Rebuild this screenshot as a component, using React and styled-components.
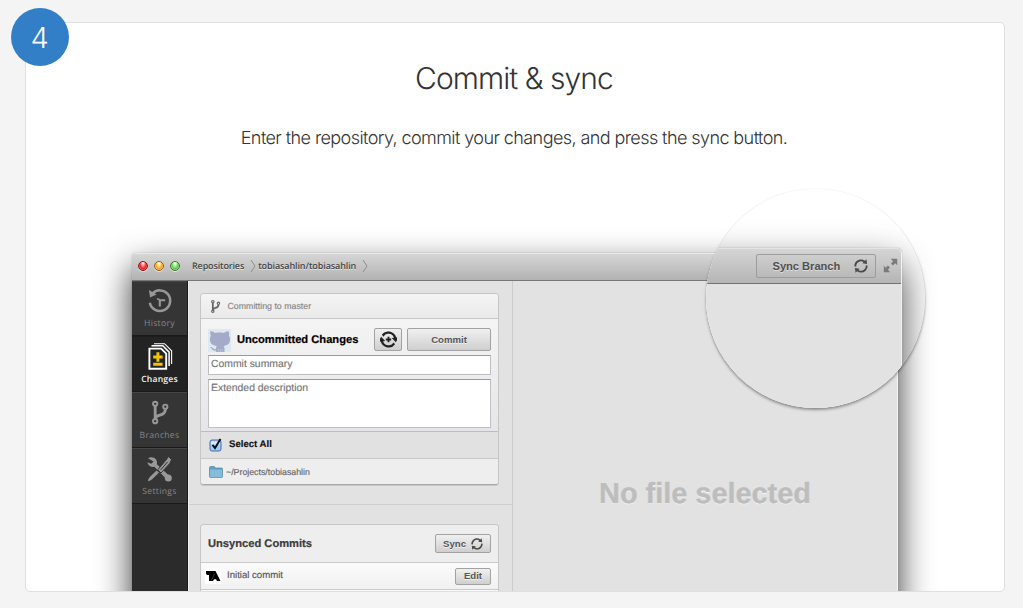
import React from 'react';
import styled, { createGlobalStyle, css } from 'styled-components';

const Global = createGlobalStyle`
  *, *::before, *::after { box-sizing: border-box; }
  body {
    margin: 0;
    background: #f4f4f4;
    font-family: "Liberation Sans", Arial, sans-serif;
    text-rendering: geometricPrecision;
    -webkit-font-smoothing: antialiased;
  }
`;

const Page = styled.main`
  position: relative;
  width: 1023px;
  height: 608px;
  padding: 22px 18px 16px 25px;
  overflow: hidden;
`;

const StepBadge = styled.div`
  position: absolute;
  left: 11px;
  top: 8px;
  z-index: 3;
  display: flex;
  align-items: center;
  justify-content: center;
  width: 58px;
  height: 58px;
  border-radius: 50%;
  background: #327fc7;
  color: #fff;
  font: 300 29px/60px Inter, sans-serif;
  padding: 2px 1px 0 0;
`;

const Card = styled.section`
  position: relative;
  display: flex;
  flex-direction: column;
  align-items: center;
  height: 570px;
  border: 1px solid #dfdfdf;
  border-radius: 5px;
  background: #fff;
  overflow: hidden;
`;

const Title = styled.h2`
  margin: 36px 0 0;
  padding-right: 2px;
  color: #333;
  font: 300 30px/40px Inter, sans-serif;
  letter-spacing: -0.95px;
`;

const Lead = styled.p`
  margin: 26px 0 0;
  padding-right: 2px;
  color: #333;
  font: 300 18px/28px Inter, sans-serif;
  letter-spacing: -0.58px;
  white-space: nowrap;
`;

const Window = styled.div`
  align-self: flex-start;
  flex: none;
  display: flex;
  flex-direction: column;
  width: 766px;
  height: 400px;
  margin: 100px 0 0 106px;
  border-radius: 4px 4px 0 0;
  background: #e2e2e2;
  box-shadow: 0 15px 34px rgba(0, 0, 0, 0.8), 0 0 1px rgba(0, 0, 0, 0.5);
`;

const TitleBar = styled.header`
  display: flex;
  align-items: center;
  height: 28px;
  padding: 0 6px 2px;
  border-top: 1px solid #e9e9e9;
  border-bottom: 1px solid #777;
  border-radius: 4px 4px 0 0;
  background: linear-gradient(#d6d6d6, #b2b2b2);
`;

const lights = {
  red: ['#fbb0ab', '#e8202b', '#8e1a1c'],
  yellow: ['#fff0ae', '#f5a623', '#97601b'],
  green: ['#d6ffc0', '#62c656', '#3c7a35'],
};

const Light = styled.span`
  width: 10px;
  height: 10px;
  margin-right: 6px;
  border: 1px solid ${(p) => lights[p.$tone][2]};
  border-radius: 50%;
  background: radial-gradient(ellipse at 50% 12%, #fff 0, ${(p) => lights[p.$tone][0]} 20%, ${(p) => lights[p.$tone][1]} 58%, ${(p) => lights[p.$tone][0]} 100%);
  box-shadow: 0 1px 0 rgba(255, 255, 255, 0.6);
`;

const Crumb = styled.span`
  margin-left: ${(p) => p.$gap}px;
  color: #444;
  font: 600 9px/14px "Open Sans", "Noto Sans", sans-serif;
  letter-spacing: ${(p) => p.$track}px;
  text-shadow: 0 1px 0 rgba(255, 255, 255, 0.6);
`;

const CrumbArrow = styled.svg`
  width: 6px;
  height: 14px;
  margin-left: 6px;
  fill: none;
  stroke: #909090;
`;

const WindowBody = styled.div`
  flex: 1;
  display: flex;
  min-height: 0;
`;

const Sidebar = styled.nav`
  width: 56px;
  background: #2b2b2b;
  border-right: 1px solid #1b1b1b;
`;

const NavItem = styled.div`
  display: flex;
  flex-direction: column;
  align-items: center;
  height: ${(p) => p.$h || 56}px;
  padding-top: ${(p) => p.$pad || 7}px;
  border-bottom: 1px solid #191919;
  box-shadow: inset 0 1px 0 ${(p) => (p.$active ? '#1d1d1d' : '#454545')};
  background: ${(p) => (p.$active ? '#232323' : '#353535')};
  color: ${(p) => (p.$active ? '#fff' : '#989898')};
  svg { width: 28px; height: 28px; }
`;

const NavLabel = styled.span`
  margin-top: 2px;
  color: ${(p) => (p.$active ? '#f4f4f4' : '#878787')};
  font: ${(p) => (p.$active ? 600 : 400)} 8.6px/12px "Open Sans", "Noto Sans", sans-serif;
  letter-spacing: ${(p) => (p.$active ? 0.2 : 0.3)}px;
`;

const ChangesPane = styled.section`
  display: flex;
  flex-direction: column;
  width: 325px;
  border-left: 1px solid #efefef;
  border-right: 1px solid #cccccc;
`;

const Group = styled.div`
  padding: ${(p) => p.$top || 11}px 13px ${(p) => p.$bottom || 0}px 11px;
  border-bottom: ${(p) => (p.$line ? '1px solid #cfcfcf' : '0')};
`;

const Panel = styled.div`
  margin-top: ${(p) => p.$top || 0}px;
  border: 1px solid #c6c6c6;
  border-bottom-color: #aaa;
  border-radius: 4px;
  background: #eee;
  box-shadow: 0 1px 0 rgba(0, 0, 0, 0.12);
  overflow: hidden;
`;

const rowTones = {
  light: css`background: linear-gradient(#f4f4f4, #eaeaea);`,
  select: css`background: #e1e1e1;`,
  plain: css`background: #eee;`,
  white: css`background: linear-gradient(#fbfbfb, #f1f1f1);`,
};

const Row = styled.div`
  display: flex;
  align-items: center;
  height: ${(p) => p.$h}px;
  padding: 0 7px 0 ${(p) => p.$left || 7}px;
  border-bottom: 1px solid #c9c9c9;
  ${(p) => rowTones[p.$tone]}
  &:last-child { border-bottom: 0; }
`;

const Form = styled.div`
  height: 113px;
  padding: 9px 7px 0;
  border-bottom: 1px solid #bcbcbc;
  background: linear-gradient(#f4f4f4, #e6e6ea);
`;

const FormHead = styled.div`
  display: flex;
  align-items: center;
  height: 24px;
`;

const Heading = styled.strong`
  flex: 1;
  margin-left: ${(p) => p.$gap || 0}px;
  color: ${(p) => p.$color || '#000'};
  font-size: 11.15px;
  line-height: 16px;
  -webkit-text-stroke: 0.2px;
`;

const Label = styled.span`
  margin-left: ${(p) => p.$gap}px;
  flex: ${(p) => (p.$grow ? 1 : 'none')};
  color: ${(p) => p.$color || '#777'};
  font-size: ${(p) => p.$size || 8.8}px;
  font-weight: ${(p) => (p.$bold ? 700 : 400)};
  line-height: 14px;
  -webkit-text-stroke: 0.15px;
`;

const Button = styled.button`
  display: flex;
  align-items: center;
  justify-content: center;
  gap: 5px;
  width: ${(p) => p.$w}px;
  height: ${(p) => p.$h}px;
  margin: 0 0 ${(p) => p.$lift || 0}px ${(p) => p.$gap || 0}px;
  padding: 0;
  border: 1px solid #a2a2a2;
  border-radius: 2px;
  background: linear-gradient(#f0f0f0, #cfcfcf);
  color: #555;
  font: 700 9.6px/12px "Liberation Sans", Arial, sans-serif;
  text-shadow: 0 1px 0 rgba(255, 255, 255, 0.7);
`;

const Field = styled.div`
  height: ${(p) => p.$h}px;
  margin-top: ${(p) => p.$top}px;
  padding: 2px 2px;
  border: 1px solid #c0c0c0;
  border-top-color: #999;
  background: #fff;
  color: #757575;
  font-size: 10.4px;
  line-height: 14px;
  -webkit-text-stroke: 0.15px;
`;

const Avatar = styled.svg`
  width: 23px;
  height: 23px;
  flex: none;
  background: #dfe8f1;
`;

const FilePane = styled.section`
  flex: 1;
  padding-top: 192px;
  border-right: 1px solid #f6f6f6;
  text-align: center;
`;

const Empty = styled.p`
  margin: 0;
  color: #bdbdbd;
  font-size: 28.9px;
  font-weight: 700;
  line-height: 42px;
  text-shadow: 0 1px 0 #f7f7f7;
  -webkit-text-stroke: 0.4px;
`;

const Lens = styled.div`
  position: absolute;
  left: 679.5px;
  top: 166px;
  width: 219px;
  height: 219px;
  padding-top: 59px;
  border-radius: 50%;
  background: #fff;
  overflow: hidden;
`;

const LensShade = styled.div`
  position: absolute;
  left: 679.5px;
  top: 166px;
  width: 219px;
  height: 219px;
  border-radius: 50%;
  box-shadow: 0 2px 3px rgba(0, 0, 0, 0.38), 0 0 1px rgba(0, 0, 0, 0.12);
`;

const LensWindow = styled.div`
  width: 224.5px;
  height: 300px;
  margin-left: -28.5px;
  border-right: 1px solid #f4f4f4;
  border-radius: 0 5px 0 0;
  background: #e2e2e2;
  box-shadow: 0 17px 38px rgba(0, 0, 0, 0.72), 0 0 1px rgba(0, 0, 0, 0.5);
`;

const LensBar = styled.div`
  display: flex;
  align-items: center;
  justify-content: flex-end;
  gap: 7px;
  height: 36px;
  padding: 0 3px 1px 0;
  border-top: 1px solid #e4e4e4;
  border-bottom: 1px solid #757575;
  border-radius: 0 5px 0 0;
  background: linear-gradient(#d5d5d5, #b5b5b5);
`;

const SyncBranch = styled.button`
  display: flex;
  align-items: center;
  justify-content: space-between;
  width: 120px;
  height: 24px;
  padding: 0 7px 0 16px;
  border: 1px solid #9c9c9c;
  border-radius: 2px;
  background: linear-gradient(#cecece, #b9b9b9);
  color: #505050;
  font: 700 11.1px/14px "Liberation Sans", Arial, sans-serif;
  text-shadow: 0 1px 0 rgba(255, 255, 255, 0.5);
  white-space: nowrap;
`;

const SyncIcon = ({ size, plus, color = '#4b4b4b' }) => (
  <svg width={size} height={size} viewBox="-.3 1.700 12.600 12.600" fill={color}>
    <path
      transform={plus ? 'rotate(38 6 8)' : undefined}
      d="M10.240 7.400a4.150 4.150 0 0 1-1.200 3.600 4.346 4.346 0 0 1-5.410.540L4.800 10.400.5 9.800l.6 4.200 1.310-1.260c2.360 1.740 5.700 1.570 7.840-.540a5.876 5.876 0 0 0 1.740-4.460l-1.750-.340zM2.960 5a4.346 4.346 0 0 1 5.410-.540L7.200 5.600l4.300.6-.6-4.200-1.310 1.260c-2.360-1.740-5.700-1.570-7.850.540C.5 5.030-.060 6.650.010 8.260l1.750.350A4.170 4.170 0 0 1 2.960 5z"
    />
    {plus && <path d="M6 6v4M4 8h4" stroke={color} strokeWidth="1.400" />}
  </svg>
);

const BranchGlyph = ({ sw = 2 }) => (
  <>
    <g fill="none" stroke="currentColor" strokeWidth={sw}>
      <circle cx="9" cy="5" r="2.2" />
      <circle cx="9" cy="23" r="2.2" />
      <circle cx="19.5" cy="8" r="2.2" />
    </g>
    <path d="M9 7.5v13M19.5 10.5c0 5-3.5 5.500-6.500 6.500-2 .7-3.700 1.800-4 3.500" fill="none" stroke="currentColor" strokeWidth={sw * 1.5} />
  </>
);

const HistoryIcon = () => (
  <svg viewBox="0 0 28 28" fill="none" stroke="currentColor" strokeWidth="2.5">
    <path d="M6.200 6.800A10.300 10.300 0 1 1 3.800 15.800" />
    <path d="M3 3l1 7.400 6.600-3z" fill="currentColor" stroke="none" />
    <path d="M13.800 19.500v-7M13.800 13.300h5.400" strokeWidth="2.100" />
    <path d="M11 11.800l2.800 1" strokeWidth="1.500" />
  </svg>
);

const ChangesIcon = () => (
  <svg viewBox="0 0 28 28" fill="none" stroke="currentColor" strokeWidth="1.9">
    <path d="M3.400 5.600h11.800l5 5v15.200H3.400z" />
    <path d="M5.500 2.800h11.300l6.300 6.300v14" strokeWidth="1.500" />
    <path d="M11.900 9.300v9.400M7.200 14h9.400M7.200 21.300h9.400" stroke="#f5c400" strokeWidth="2.900" />
    <path d="M8 .700h10.500l7.100 7.100v13.200" strokeWidth="1.100" />
  </svg>
);

const BranchesIcon = () => (
  <svg viewBox="-.5 0 29 29"><BranchGlyph /></svg>
);

const SettingsIcon = () => (
  <svg viewBox="0 0 28 28" fill="currentColor">
    <path d="M2 3.200c2.600-1.500 6.300-1 8 1.300 1.200 1.700 1.200 3.300.8 4.700L24.800 22.300c1.600 1.700-.9 4.900-3 3.200L8.400 11.700c-2.900.8-6.200-.7-7.100-4.500l3.900 1.500 2.400-2.300z" />
    <path d="M22.500 1.500l3 3-1.500 3.700-9 9.800-3.200-3.200 8.200-9.800z" stroke="#353535" strokeWidth="1" />
    <path d="M13 17.500l-6.800 6.800-3.400 2-1-1 2-3.200 6.700-6.600z" />
    <path d="M14.700 14.800l7-8" stroke="#353535" strokeWidth="1" />
    <circle cx="22.300" cy="23" r="3.500" />
  </svg>
);

const Octocat = () => (
  <Avatar viewBox="0 0 23 23">
    <path
      fill="#a3abc9"
      d="M2.300 2.300C4 2 5.700 2.800 7 3.900c2.700-.6 6.300-.6 9 0 1.300-1.100 3-1.900 4.500-1.600.8 1.500.8 3 .4 4.400 1 1.300 1.300 2.700 1.100 4.500-.3 3.600-2.500 5.200-6.500 5.700.8.7 1 1.500 1 2.700V23H7.800v-1.500c-2.300.3-3.400-.5-4.100-1.700-.5-.8-.9-1.300-1.700-1.700.9-.5 2.200 0 2.900 1 .8 1 1.500 1.300 2.900.9.100-1.300.4-2.400 1-3.100-4-.5-6.500-2.100-6.800-5.700-.2-1.800.1-3.200.9-4.500-.5-1.400-.9-2.900-.6-4.400z"
    />
    <path d="M10.300 20v3M12.300 20v3M14.300 20v3" stroke="#c5cde0" strokeWidth=".6" />
  </Avatar>
);

const Checkbox = () => (
  <svg width="15" height="15" viewBox="0 0 15 15" fill="none">
    <rect x="2" y="2" width="11" height="11" rx="2" fill="#9ecbf3" stroke="#5069a5" />
    <path d="M3 3.500h9v3H3z" fill="#d8ebfc" />
    <path d="M4.500 6.800L7 10 12.500 1" stroke="#0a0a18" strokeWidth="1.900" />
  </svg>
);

const Folder = () => (
  <svg width="15" height="12" viewBox="0 0 15 12">
    <path d="M1.500 1.500Q1.500.5 2.500.5h3.400q.7 0 1 .8l.3.700h6.300q1 0 1 1v7.500q0 1-1 1h-11q-1 0-1-1z" fill="#5f9fc0" stroke="#4988a8" strokeWidth=".7" />
    <path d="M2 3.500h12v7q0 .7-.7.7H2.700q-.7 0-.7-.7z" fill="#83bdd9" />
  </svg>
);

const CommitAvatar = () => (
  <svg width="16" height="16" viewBox="0 0 16 16">
    <rect width="16" height="16" rx="2" fill="#fff" />
    <path d="M1 3h9.500l5 10h-3.500l-1-1.700H9L8 13H4V7H2.500Q1 7 1 5z" />
    <path d="M6.500 12l3-6" stroke="#777" strokeWidth=".5" />
  </svg>
);

const ExpandIcon = () => (
  <svg width="15" height="15" viewBox="0 0 15 15" fill="#7b7b7b">
    <path d="M7.700 .800h6.500v6.500l-2-2-2.200 2.100-2-2 2.100-2.200zM.8 7.700l2 2L4.900 7.600l2 2-2 2.200 2.200 2.400H.8z" />
  </svg>
);

const navItems = [
  { label: 'History', Icon: HistoryIcon, h: 55, pad: 6 },
  { label: 'Changes', Icon: ChangesIcon, active: true },
  { label: 'Branches', Icon: BranchesIcon },
  { label: 'Settings', Icon: SettingsIcon },
];

const Arrow = () => (
  <CrumbArrow viewBox="0 0 6 14"><path d="M1 1l4 6-4 6" /></CrumbArrow>
);

export default function App() {
  return (
    <Page>
      <Global />
      <StepBadge>4</StepBadge>
      <Card>
        <Title>Commit &amp; sync</Title>
        <Lead>Enter the repository, commit your changes, and press the sync button.</Lead>
        <Window>
          <TitleBar>
            <Light $tone="red" />
            <Light $tone="yellow" />
            <Light $tone="green" />
            <Crumb $gap={6} $track={-0.15}>Repositories</Crumb>
            <Arrow />
            <Crumb $gap={2} $track={-0.1}>tobiasahlin/tobiasahlin</Crumb>
            <Arrow />
          </TitleBar>
          <WindowBody>
            <Sidebar>
              {navItems.map(({ label, Icon, active, h, pad }) => (
                <NavItem key={label} $active={active} $h={h} $pad={pad}>
                  <Icon />
                  <NavLabel $active={active}>{label}</NavLabel>
                </NavItem>
              ))}
            </Sidebar>
            <ChangesPane>
              <Group $top={12} $bottom={19} $line>
                <Panel>
                  <Row $h={25} $tone="light">
                    <svg width="15" height="15" viewBox="0 0 28 28" color="#666"><BranchGlyph sw={2.2} /></svg>
                    <Label $gap={4.5} $color="#888">Committing to master</Label>
                  </Row>
                  <Form>
                    <FormHead>
                      <Octocat />
                      <Heading $gap={6}>Uncommitted Changes</Heading>
                      <Button $w={28} $h={23} $lift={1} aria-label="Refresh">
                        <SyncIcon size={17} plus color="#222" />
                      </Button>
                      <Button $w={84} $h={23} $gap={5} $lift={1}>Commit</Button>
                    </FormHead>
                    <Field $h={20} $top={3}>Commit summary</Field>
                    <Field $h={49} $top={4}>Extended description</Field>
                  </Form>
                  <Row $h={27} $tone="select">
                    <Checkbox />
                    <Label $gap={6} $size={9.6} $color="#111" $bold>Select All</Label>
                  </Row>
                  <Row $h={25} $tone="plain">
                    <Folder />
                    <Label $gap={3} $color="#666">~/Projects/tobiasahlin</Label>
                  </Row>
                </Panel>
              </Group>
              <Group>
                <Panel $top={8}>
                  <Row $h={38} $tone="plain">
                    <Heading $color="#3c3c3c">Unsynced Commits</Heading>
                    <Button $w={56} $h={19}>
                      Sync <SyncIcon size={12} />
                    </Button>
                  </Row>
                  <Row $h={27} $left={4} $tone="white">
                    <CommitAvatar />
                    <Label $gap={6} $size={9.6} $color="#555" $grow>Initial commit</Label>
                    <Button $w={36} $h={17}>Edit</Button>
                  </Row>
                  <Row $h={26} $tone="white" />
                </Panel>
              </Group>
            </ChangesPane>
            <FilePane>
              <Empty>No file selected</Empty>
            </FilePane>
          </WindowBody>
        </Window>
        <LensShade />
        <Lens>
          <LensWindow>
            <LensBar>
              <SyncBranch>
                Sync Branch <SyncIcon size={14} />
              </SyncBranch>
              <ExpandIcon />
            </LensBar>
          </LensWindow>
        </Lens>
      </Card>
    </Page>
  );
}
